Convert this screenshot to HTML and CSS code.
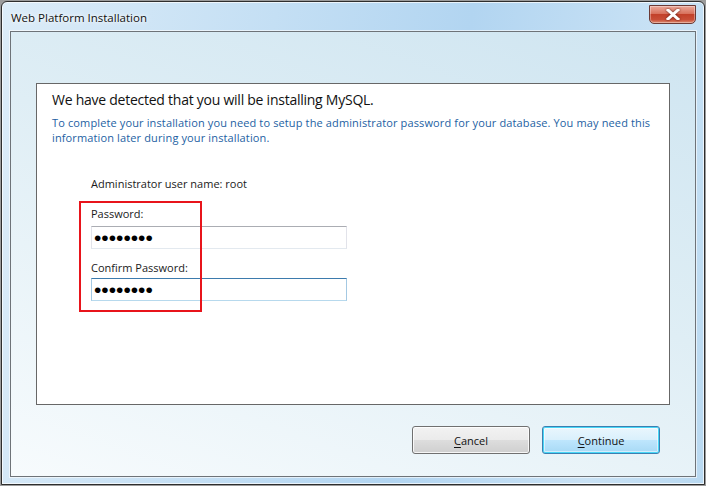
FILE: index.html
```html
<!DOCTYPE html>
<html lang="en">
<head>
  <meta charset="UTF-8">
  <title>Web Platform Installation</title>
  <link rel="stylesheet" href="styles.css">
</head>
<body>
  <div class="window">
    <div class="titlebar">
      <span class="title">Web Platform Installation</span>
      <button class="close" aria-label="Close">
        <svg width="14" height="11" viewBox="0 0 14 11"><path d="M2 1 L12 10 M12 1 L2 10" stroke="#fff" stroke-width="3" stroke-linecap="square"/></svg>
      </button>
    </div>
    <div class="client">
      <div class="panel">
        <h1>We have detected that you will be installing MySQL.</h1>
        <p class="note">To complete your installation you need to setup the administrator password for your database. You may need this<br>information later during your installation.</p>
        <div class="form">
          <p class="user">Administrator user name: root</p>
          <div class="fields">
            <span class="mark"></span>
            <label for="pw">Password:</label>
            <input type="password" id="pw" value="12345678">
            <label for="pw2">Confirm Password:</label>
            <input type="password" id="pw2" class="focus" value="12345678">
          </div>
        </div>
      </div>
      <div class="actions">
        <button class="btn"><u>C</u>ancel</button>
        <button class="btn default"><u>C</u>ontinue</button>
      </div>
    </div>
  </div>
</body>
</html>
```

FILE: styles.css
```css
body { margin: 0; background: #9c9c9c; font-family: "Open Sans", "Noto Sans", sans-serif; font-size: 11px; }
.window { box-sizing: border-box; width: 704px; height: 484px; margin: 1px; border: 1px solid #2e2e2e; border-radius: 6px 6px 0 0; background: linear-gradient(100deg, #dcecf8 0%, #c4dff4 35%, #b2d5f1 60%, #c9e2f5 85%, #b9d9f1 100%); box-shadow: inset 0 0 0 1px rgba(255,255,255,0.7); display: flex; flex-direction: column; }
.titlebar { height: 29px; display: flex; align-items: flex-start; position: relative; }
.title { margin: 8px 0 0 9px; font-size: 11.5px; color: #111; text-shadow: 0 0 6px #fff, 0 0 3px #fff; }
.close { position: absolute; right: 8px; top: 3px; width: 47px; height: 19px; border: 1px solid #6b3a35; border-radius: 0 0 5px 5px; background: linear-gradient(#eba99b 0%, #d8725d 45%, #c2412a 50%, #c84e37 80%, #dd8a70 100%); display: flex; align-items: center; justify-content: center; padding: 0; box-shadow: inset 0 0 0 1px rgba(255,255,255,0.35); }
.close svg { filter: drop-shadow(0 0 1px #5a1a10); }
.client { flex: 1; margin: 0 8px 7px 8px; border: 1px solid #6e7378; background: linear-gradient(200deg, #cfe5f1 0%, #dfeef5 45%, #f7fbfd 100%); box-shadow: 0 0 0 1px rgba(255,255,255,0.6); display: flex; flex-direction: column; }
.panel { margin: 51px 25px 0 25px; height: 322px; box-sizing: border-box; border: 1px solid #676767; background: #fff; padding: 6px 15px 0 15px; }
h1 { margin: 0; font-size: 14px; font-weight: normal; letter-spacing: -0.25px; line-height: 20px; color: #111; }
.note { margin: 5px 0 0 0; line-height: 15px; letter-spacing: 0.13px; color: #245fa3; }
.form { margin: 31px 0 0 39px; }
.user { margin: 0; line-height: 15px; color: #1a1a1a; }
.fields { position: relative; display: flex; flex-direction: column; align-items: flex-start; margin-top: 15px; }
.fields label { line-height: 15px; color: #1a1a1a; }
.fields input { box-sizing: border-box; width: 256px; height: 23px; margin: 5px 0 11px 0; padding: 0 2px; border: 1px solid #e2e3ea; border-top-color: #abadb3; border-bottom-color: #e3e9ef; font-family: "Liberation Sans", sans-serif; font-size: 21px; letter-spacing: 0; color: #000; outline: none; }
.fields input.focus { margin: 3px 0 0 0; border-color: #a4c9e3; border-top-color: #3d7bad; border-bottom-color: #b7d9ed; }
.mark { position: absolute; left: -12px; top: -5px; width: 123px; height: 111px; box-sizing: border-box; border: 2px solid #e8141b; }
.actions { display: flex; justify-content: flex-end; gap: 12px; margin: 21px 35px 0 0; }
.btn { box-sizing: border-box; width: 118px; height: 28px; border: 1px solid #707070; border-radius: 3px; background: linear-gradient(#f2f2f2 0%, #ebebeb 50%, #dddddd 51%, #cfcfcf 100%); box-shadow: inset 0 0 0 1px rgba(255,255,255,0.8); font-family: inherit; font-size: 11px; color: #111; padding: 0; }
.btn u { text-decoration-thickness: 1px; text-underline-offset: 2px; }
.default { border-color: #3c7fb1; box-shadow: inset 0 0 0 1px #48d7f7, inset 0 0 0 2px rgba(255,255,255,0.5); background: linear-gradient(#eaf6fd 0%, #d9f0fc 50%, #bee6fd 51%, #a7d9f5 100%); }
```
